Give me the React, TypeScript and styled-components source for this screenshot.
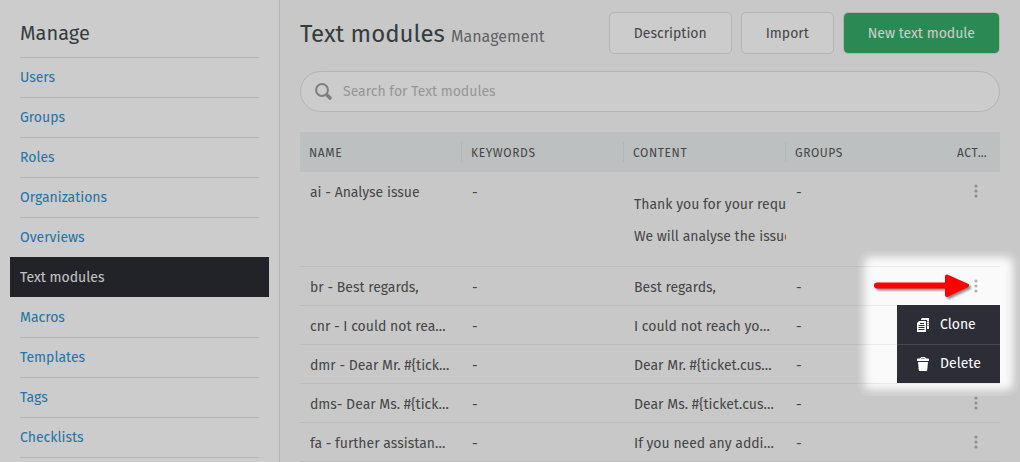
import React from 'react';
import styled, { createGlobalStyle } from 'styled-components';

const GlobalStyle = createGlobalStyle`
  *, *::before, *::after { box-sizing: border-box; }
  body {
    margin: 0;
    background: #fafafb;
    color: #585858;
    font-family: "Fira Sans", "Noto Sans", "Open Sans", sans-serif;
    font-size: 14px;
    line-height: 20px;
  }
  button, input { font: inherit; color: inherit; }
`;

const Page = styled.div`
  display: flex;
  min-height: 100vh;
  overflow: hidden;
`;

const Sidebar = styled.nav`
  flex: 0 0 280px;
  padding: 13px 20px 0;
  background: #ffffff;
  border-right: 1px solid #e3e3e3;
`;

const SidebarTitle = styled.h2`
  margin: 0;
  height: 44px;
  font-size: 20px;
  font-weight: 400;
  line-height: 40px;
  color: #444d51;
`;

const NavList = styled.ul`
  margin: 0;
  padding: 0;
  list-style: none;
  border-bottom: 1px solid #e3e3e3;
`;

const NavItem = styled.li<{ $plain?: boolean }>`
  border-top: 1px solid ${(p) => (p.$plain ? 'transparent' : '#e3e3e3')};
`;

const ActiveItem = styled.li`
  margin: 0 -10px;
  padding: 0 10px;
  border-top: 1px solid #2b2c34;
  background: #2b2c34;
`;

const NavLink = styled.a<{ $active?: boolean }>`
  display: block;
  line-height: 39px;
  text-decoration: none;
  color: ${(p) => (p.$active ? '#f4f4f4' : '#2b92d4')};
`;

const Main = styled.main`
  flex: 1;
  min-width: 0;
  padding: 12px 20px 0;
`;

const Header = styled.header`
  display: flex;
  align-items: center;
  justify-content: space-between;
  height: 42px;
`;

const Title = styled.h1`
  margin: 0;
  padding-top: 4px;
  font-size: 24px;
  font-weight: 400;
  line-height: 40px;
  white-space: nowrap;
  color: #444d51;
`;

const Subtitle = styled.small`
  font-size: 16px;
  color: #7b7b7b;
`;

const Actions = styled.div`
  display: flex;
  gap: 9px;
`;

const Button = styled.button<{ $primary?: boolean }>`
  height: 42px;
  padding: 2px 24px 0;
  border: 1px solid ${(p) => (p.$primary ? '#d5e5db' : '#e3e3e3')};
  border-radius: 5px;
  background: ${(p) => (p.$primary ? '#36ad69' : '#ffffff')};
  background-clip: padding-box;
  color: ${(p) => (p.$primary ? '#ffffff' : '#585858')};
  white-space: nowrap;
`;

const Search = styled.label`
  display: flex;
  align-items: center;
  gap: 10px;
  height: 41px;
  margin-top: 17px;
  padding: 0 14px;
  border: 1px solid #e1e1e1;
  border-radius: 21px;
  background: #ffffff;
`;

const SearchInput = styled.input`
  flex: 1;
  min-width: 0;
  padding: 0;
  border: 0;
  outline: 0;
  background: transparent;
  &::placeholder { color: #bcbcbc; opacity: 1; }
`;

const Table = styled.table`
  width: 100%;
  margin-top: 20px;
  table-layout: fixed;
  border-collapse: separate;
  border-spacing: 0;
`;

const HeadCell = styled.th<{ $narrow?: boolean }>`
  width: ${(p) => (p.$narrow ? '52px' : 'auto')};
  padding: 10px 0;
  background: #ebf1f2;
  font-size: 12px;
  font-weight: 400;
  text-align: left;
  text-transform: uppercase;
  letter-spacing: 0.05em;
`;

const HeadLabel = styled.div<{ $divider?: boolean }>`
  height: 20px;
  padding-left: 9px;
  line-height: 22px;
  border-right: 1px solid ${(p) => (p.$divider ? '#dfe6e8' : 'transparent')};
`;

const Cell = styled.td`
  padding: 11px 0 7px 10px;
  overflow: hidden;
  border-bottom: 1px solid #ececed;
  vertical-align: top;
  white-space: nowrap;
`;

const Paragraph = styled.p`
  margin: 12px 0;
`;

const ActionCell = styled.td`
  position: relative;
  padding: 0;
  border-bottom: 1px solid #ececed;
  vertical-align: top;
  text-align: right;
`;

const DotsButton = styled.button`
  display: inline-flex;
  align-items: center;
  justify-content: center;
  width: 48px;
  height: 38px;
  padding: 0;
  border: 0;
  background: none;
  color: #b3b3b3;
  vertical-align: top;
`;

const Menu = styled.div`
  position: absolute;
  top: 38px;
  right: 0;
  z-index: 1;
  width: 103px;
  background: #2c2d36;
`;

const MenuItem = styled.button`
  display: flex;
  align-items: center;
  gap: 10px;
  width: 100%;
  height: 39px;
  padding: 0 0 0 20px;
  border: 0;
  background: none;
  color: #ffffff;
  & + & { border-top: 1px solid #474853; }
`;

const Spotlight = styled.div`
  position: absolute;
  top: -16px;
  right: -19px;
  z-index: 2;
  width: 161px;
  height: 145px;
  border-radius: 12px;
  box-shadow: inset 0 0 8px 6px rgba(0, 0, 0, 0.2), 0 0 0 3000px rgba(0, 0, 0, 0.2);
  pointer-events: none;
`;

const Pointer = styled.svg`
  position: absolute;
  top: 4px;
  right: 25px;
  z-index: 3;
  filter: drop-shadow(2px 2px 1px rgba(0, 0, 0, 0.45));
  pointer-events: none;
`;

const SearchIcon = () => (
  <svg width="18" height="18" viewBox="0 0 18 18" fill="none" stroke="#9b9e9f" aria-hidden="true">
    <circle cx="7" cy="7" r="5.9" strokeWidth="2" />
    <path d="M11 11l1.500 1.500" strokeWidth="2" />
    <path d="M12.500 12.500l2.500 2.500" strokeWidth="3.6" strokeLinecap="round" />
  </svg>
);

const DotsIcon = () => (
  <svg width="4" height="14" viewBox="0 0 4 14" fill="currentColor" aria-hidden="true">
    <circle cx="2" cy="2" r="1.6" />
    <circle cx="2" cy="7" r="1.6" />
    <circle cx="2" cy="12" r="1.6" />
  </svg>
);

const CloneIcon = () => (
  <svg width="13" height="14" viewBox="0 0 13 14" aria-hidden="true">
    <path d="M5 0h7v11h-2V2H4V1z" fill="#fff" />
    <path d="M10.500 3.500h1M10.500 5.500h1M10.500 7.500h1" stroke="#2c2d36" />
    <path d="M2 3h7v11H0V5z" fill="#fff" />
    <path d="M3 5.500h4M1.500 7.500h6M1.500 9.500h6M1.500 11.500h6" stroke="#2c2d36" />
  </svg>
);

const TrashIcon = () => (
  <svg width="13" height="14" viewBox="0 0 13 14" fill="#fff" aria-hidden="true">
    <path d="M4 0h4l1 1.500h2.500l.5 1V4H0V2.500l.5-1H3zM4.600 1l-.4.6h3.600L7.400 1z" fillRule="evenodd" />
    <path d="M1 5h10l-.8 8.200q-.1.8-.9.8H2.700q-.8 0-.9-.8z" />
  </svg>
);

const ArrowIcon = () => (
  <Pointer width="104" height="30" viewBox="0 0 104 30" aria-hidden="true">
    <path d="M6 14.500h75" stroke="#ff0000" strokeWidth="6" strokeLinecap="round" />
    <path d="M76 5.500L96 14.500L76 24Z" fill="#ff0000" stroke="#ff0000" strokeWidth="4" strokeLinejoin="round" />
  </Pointer>
);

const navItems = [
  'Users', 'Groups', 'Roles', 'Organizations', 'Overviews',
  'Text modules', 'Macros', 'Templates', 'Tags', 'Checklists',
];
const activeItem = 'Text modules';

const columns = ['Name', 'Keywords', 'Content', 'Groups'];

type Module = { name: string; content: string | string[]; menuOpen?: boolean };

const modules: Module[] = [
  { name: 'ai - Analyse issue', content: ['Thank you for your request.', 'We will analyse the issue.'] },
  { name: 'br - Best regards,', content: 'Best regards,', menuOpen: true },
  { name: 'cnr - I could not rea…', content: 'I could not reach yo…' },
  { name: 'dmr - Dear Mr. #{tick…', content: 'Dear Mr. #{ticket.cus…' },
  { name: 'dms- Dear Ms. #{tick…', content: 'Dear Ms. #{ticket.cus…' },
  { name: 'fa - further assistan…', content: 'If you need any addi…' },
];

const ModuleRow = ({ name, content, menuOpen }: Module) => (
  <tr>
    <Cell>{name}</Cell>
    <Cell>-</Cell>
    <Cell>
      {Array.isArray(content) ? content.map((line) => <Paragraph key={line}>{line}</Paragraph>) : content}
    </Cell>
    <Cell>-</Cell>
    <ActionCell>
      <DotsButton type="button" aria-label={`Actions for ${name}`}><DotsIcon /></DotsButton>
      {menuOpen && (
        <>
          <Menu>
            <MenuItem type="button"><CloneIcon />Clone</MenuItem>
            <MenuItem type="button"><TrashIcon />Delete</MenuItem>
          </Menu>
          <Spotlight />
          <ArrowIcon />
        </>
      )}
    </ActionCell>
  </tr>
);

export default function App() {
  return (
    <>
      <GlobalStyle />
      <Page>
        <Sidebar>
          <SidebarTitle>Manage</SidebarTitle>
          <NavList>
            {navItems.map((item, i) =>
              item === activeItem ? (
                <ActiveItem key={item}><NavLink href="#" $active>{item}</NavLink></ActiveItem>
              ) : (
                <NavItem key={item} $plain={navItems[i - 1] === activeItem}>
                  <NavLink href="#">{item}</NavLink>
                </NavItem>
              ),
            )}
          </NavList>
        </Sidebar>
        <Main>
          <Header>
            <Title>Text modules <Subtitle>Management</Subtitle></Title>
            <Actions>
              <Button type="button">Description</Button>
              <Button type="button">Import</Button>
              <Button type="button" $primary>New text module</Button>
            </Actions>
          </Header>
          <Search>
            <SearchIcon />
            <SearchInput type="text" placeholder="Search for Text modules" aria-label="Search for Text modules" />
          </Search>
          <Table>
            <thead>
              <tr>
                {columns.map((c, i) => (
                  <HeadCell key={c}><HeadLabel $divider={i < 3}>{c}</HeadLabel></HeadCell>
                ))}
                <HeadCell $narrow><HeadLabel>Act…</HeadLabel></HeadCell>
              </tr>
            </thead>
            <tbody>
              {modules.map((m) => <ModuleRow key={m.name} {...m} />)}
            </tbody>
          </Table>
        </Main>
      </Page>
    </>
  );
}
